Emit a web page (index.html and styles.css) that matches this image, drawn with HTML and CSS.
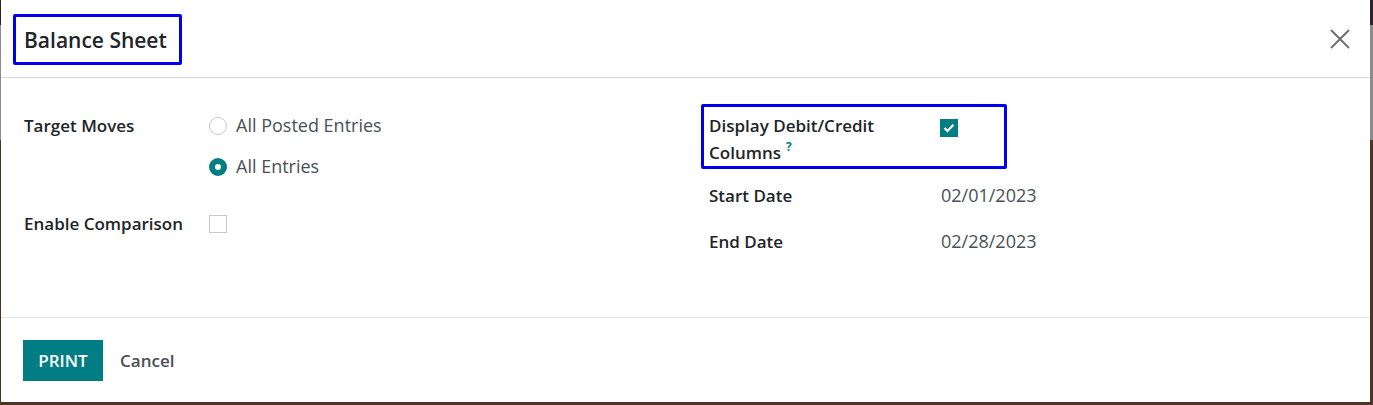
FILE: index.html
```html
<!DOCTYPE html>
<html lang="en">
<head>
<meta charset="utf-8">
<title>Balance Sheet</title>
<link rel="stylesheet" href="styles.css">
</head>
<body>
<div class="modal">
  <header class="modal-header">
    <h4 class="modal-title">Balance Sheet</h4>
    <button class="btn-close" aria-label="Close">
      <svg width="20" height="20" viewBox="0 0 20 20"><path d="M1 1 L19 19 M19 1 L1 19" stroke="#6f6f6f" stroke-width="2" fill="none"/></svg>
    </button>
  </header>
  <main class="modal-body">
    <div class="group group-left">
      <div class="label">Target Moves</div>
      <div class="field radios">
        <label class="radio"><span class="radio-dot"></span>All Posted Entries</label>
        <label class="radio"><span class="radio-dot checked"></span>All Entries</label>
      </div>
      <div class="label label-comp">Enable Comparison</div>
      <div class="field field-comp"><span class="checkbox"></span></div>
    </div>
    <div class="group group-right">
      <div class="row highlighted">
        <div class="label">Display Debit/Credit <span class="nowrap">Columns<sup class="help">?</sup></span></div>
        <div class="field field-check"><span class="checkbox checked"><svg width="12" height="10" viewBox="0 0 12 10"><path d="M1.5 5 L4.5 8 L10.5 1.8" stroke="#fff" stroke-width="2.2" fill="none"/></svg></span></div>
      </div>
      <div class="row row-start">
        <div class="label">Start Date</div>
        <div class="field value">02/01/2023</div>
      </div>
      <div class="row row-end">
        <div class="label">End Date</div>
        <div class="field value">02/28/2023</div>
      </div>
    </div>
  </main>
  <footer class="modal-footer">
    <button class="btn btn-primary">PRINT</button>
    <button class="btn btn-secondary">Cancel</button>
  </footer>
</div>
</body>
</html>
```
FILE: styles.css
```css
html, body {
  margin: 0;
  padding: 0;
}
body {
  width: 1373px;
  height: 405px;
  overflow: hidden;
  background: linear-gradient(to bottom, #2b2330 0, #2b2330 25px, #8c8c8c 25px, #8c8c8c 140px, #4e3426 140px);
  font-family: "Open Sans", "Noto Sans", sans-serif;
  color: #212529;
}
.modal {
  margin-left: 1px;
  width: 1369px;
  height: 402px;
  background: #fff;
  display: flex;
  flex-direction: column;
}
.modal-header {
  height: 77px;
  border-bottom: 1px solid #d8dadd;
  display: flex;
  align-items: center;
  justify-content: space-between;
  padding: 0 19px 0 23px;
  box-sizing: content-box;
}
.modal-title {
  margin: 0;
  font-size: 21px;
  font-weight: 600;
  line-height: 28px;
  position: relative;
  top: 1px;
  color: #212529;
}
.modal-title::after {
  content: "";
  position: absolute;
  left: -11px;
  top: -12px;
  right: -15px;
  bottom: -11px;
  border: 3px solid #0000f0;
  border-radius: 2px;
}
.btn-close {
  background: none;
  border: 0;
  padding: 0;
  width: 22px;
  height: 22px;
  display: flex;
  align-items: center;
  justify-content: center;
}
.modal-body {
  flex: 1;
  display: flex;
  padding: 34px 24px 0 23px;
  border-bottom: 1px solid #e4e5e7;
  font-size: 18px;
  line-height: 27px;
}
.group-left {
  width: 685px;
  display: grid;
  grid-template-columns: 185px 1fr;
  align-content: start;
}
.label {
  font-weight: 600;
  font-size: 17px;
  color: #212529;
}
.nowrap {
  white-space: nowrap;
}
.radios {
  display: flex;
  flex-direction: column;
  gap: 14px;
}
.radio {
  display: flex;
  align-items: center;
  color: #495057;
}
.radio-dot {
  width: 16px;
  height: 16px;
  border: 1px solid #c7c9cc;
  border-radius: 50%;
  margin-right: 9px;
  box-sizing: content-box;
}
.radio-dot.checked {
  width: 6px;
  height: 6px;
  border: 6px solid #017e84;
}
.label-comp,
.field-comp {
  margin-top: 30px;
}
.field-comp {
  display: flex;
  align-items: center;
}
.checkbox {
  width: 16px;
  height: 16px;
  border: 1px solid #c7c9cc;
  display: inline-flex;
  align-items: center;
  justify-content: center;
  box-sizing: content-box;
}
.checkbox.checked {
  background: #017e84;
  border-color: #017e84;
}
.group-right {
  flex: 1;
  display: flex;
  flex-direction: column;
}
.row {
  display: grid;
  grid-template-columns: 232px 1fr;
}
.highlighted {
  position: relative;
  width: 290px;
}
.highlighted .label {
  width: 200px;
}
.field-check {
  padding-top: 1px;
  margin-left: -1px;
}
.highlighted::after {
  content: "";
  position: absolute;
  left: -8px;
  top: -8px;
  right: -8px;
  bottom: -3px;
  border: 3px solid #0000f0;
  border-radius: 2px;
}
.help {
  color: #017e84;
  font-size: 12px;
  font-weight: 700;
  margin-left: 5px;
  vertical-align: 8px;
  line-height: 0;
}
.row-start {
  margin-top: 16px;
}
.row-end {
  margin-top: 19px;
}
.value {
  color: #495057;
}
.modal-footer {
  height: 84px;
  display: flex;
  align-items: flex-start;
  padding: 22px 22px 0;
  box-sizing: border-box;
}
.btn {
  font-family: inherit;
  font-size: 17px;
  font-weight: 600;
  border: 0;
  height: 41px;
  padding: 0 14px;
  cursor: pointer;
}
.btn-primary {
  background: #017e84;
  color: #fff;
  width: 80px;
}
.btn-secondary {
  background: none;
  color: #4b4e55;
  margin-left: 3px;
}
```
